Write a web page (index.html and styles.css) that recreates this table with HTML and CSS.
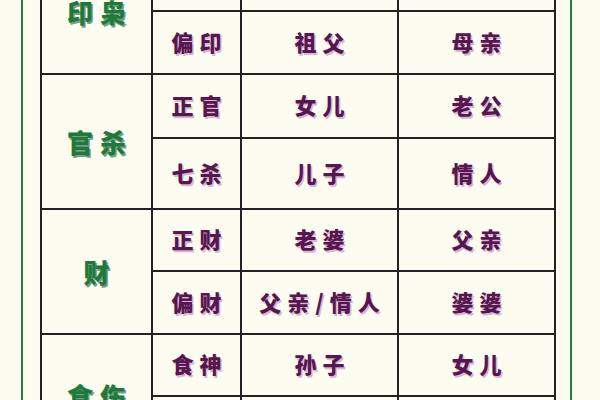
FILE: index.html
```html
<!DOCTYPE html>
<html lang="zh">
<head>
<meta charset="utf-8">
<title>六亲十神</title>
<link rel="stylesheet" href="styles.css">
</head>
<body>
<div class="frame">
  <table class="kin">
    <colgroup>
      <col class="c1"><col class="c2"><col class="c3"><col class="c4">
    </colgroup>
    <tbody>
      <tr class="r1">
        <td class="grp" rowspan="2">印枭</td>
        <td class="god"></td><td class="rel"></td><td class="rel"></td>
      </tr>
      <tr class="r2">
        <td class="god">偏印</td><td class="rel">祖父</td><td class="rel">母亲</td>
      </tr>
      <tr class="r3">
        <td class="grp" rowspan="2">官杀</td>
        <td class="god">正官</td><td class="rel">女儿</td><td class="rel">老公</td>
      </tr>
      <tr class="r4">
        <td class="god">七杀</td><td class="rel">儿子</td><td class="rel">情人</td>
      </tr>
      <tr class="r5">
        <td class="grp" rowspan="2">财</td>
        <td class="god">正财</td><td class="rel">老婆</td><td class="rel">父亲</td>
      </tr>
      <tr class="r6">
        <td class="god">偏财</td><td class="rel">父亲/情人</td><td class="rel">婆婆</td>
      </tr>
      <tr class="r7">
        <td class="grp" rowspan="2">食伤</td>
        <td class="god">食神</td><td class="rel">孙子</td><td class="rel">女儿</td>
      </tr>
      <tr class="r8">
        <td class="god"></td><td class="rel"></td><td class="rel"></td>
      </tr>
    </tbody>
  </table>
</div>
</body>
</html>
```

FILE: styles.css
```css
html, body {
  margin: 0;
  padding: 0;
  background: #fbfbef;
  overflow: hidden;
}
body {
  width: 600px;
  height: 400px;
  font-family: "Noto Sans CJK SC", "Noto Sans CJK JP", sans-serif;
}
.frame {
  margin: -60px 28px 0 21px;
  padding: 8px 17px 40px 17px;
  border-left: 2px solid #2a7a44;
  border-right: 2px solid #2a7a44;
  background: #fcfcf1;
}
.kin {
  border-collapse: collapse;
  width: 514px;
  table-layout: fixed;
}
.c1 { width: 111px; }
.c2 { width: 89px; }
.c3 { width: 157px; }
.c4 { width: 157px; }
.kin td {
  border: 2px solid #222;
  padding: 0 0 4px 0;
  text-align: center;
  vertical-align: middle;
  font-weight: 900;
  line-height: 1;
}
.r1 { height: 62px; }
.r2 { height: 63px; }
.r3 { height: 64px; }
.r4 { height: 71px; }
.r5 { height: 62px; }
.r6 { height: 63px; }
.r7 { height: 62px; }
.r8 { height: 62px; }
.kin td.grp {
  padding: 0;
  color: #1d7a3c;
  font-size: 26px;
  letter-spacing: 7px;
  text-indent: 7px;
  text-shadow: 1.5px 1.5px 0 #7f9a86;
}
.god, .rel {
  color: #571650;
  font-size: 22px;
  letter-spacing: 6px;
  text-indent: 6px;
  text-shadow: 1.5px 1.5px 0 #d9b6d2;
}
```
